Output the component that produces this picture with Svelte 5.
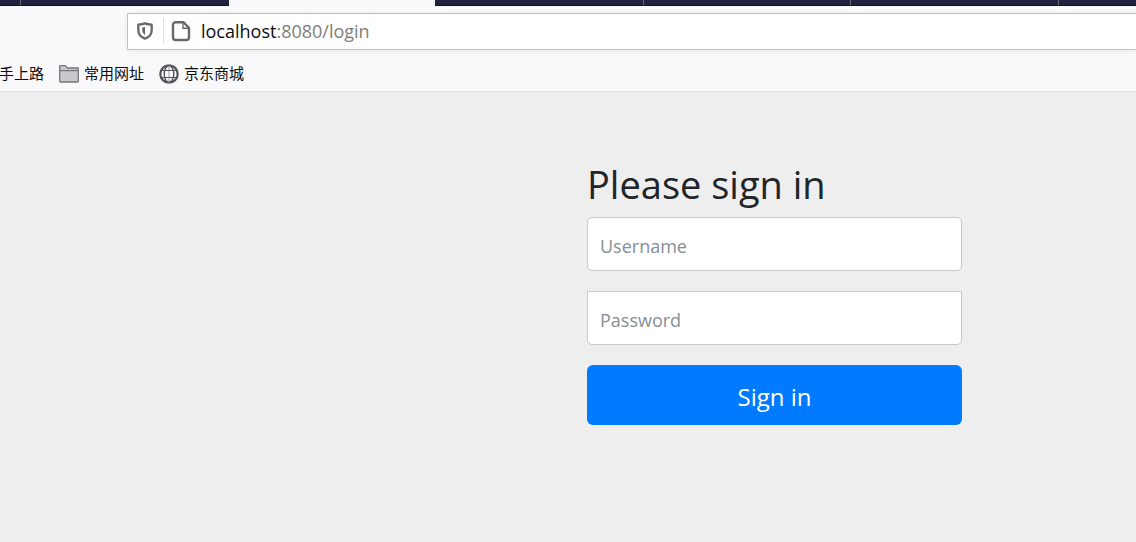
<script>
  const tabs = [
    { id: 1, active: false },
    { id: 2, active: false },
    { id: 3, active: true },
    { id: 4, active: false },
    { id: 5, active: false },
    { id: 6, active: false },
    { id: 7, active: false }
  ];

  const bookmarks = [
    { label: '手上路', icon: null },
    { label: '常用网址', icon: 'folder' },
    { label: '京东商城', icon: 'globe' }
  ];

  let username = $state('');
  let password = $state('');

  function handleSubmit(event) {
    event.preventDefault();
  }
</script>

<div class="browser">
  <div class="tab-strip">
    {#each tabs as tab (tab.id)}
      <div class="tab" class:active={tab.active}></div>
    {/each}
  </div>

  <div class="toolbar">
    <div class="url-bar">
      <svg class="shield" width="18" height="20" viewBox="0 0 18 20" aria-hidden="true">
        <path
          d="M9 2.4C6.8 3.3 4.6 3.6 2.3 3.7V8.9C2.3 13 4.6 16 9 17.6C13.4 16 15.7 13 15.7 8.9V3.7C13.4 3.6 11.2 3.3 9 2.4Z"
          fill="none"
          stroke="#68686a"
          stroke-width="2.3"
          stroke-linejoin="round"
        />
        <path d="M9 6V14C7.2 12.8 6.2 11.2 6.2 9V6.6Z" fill="#68686a" />
      </svg>
      <span class="divider"></span>
      <svg class="page-icon" width="20" height="22" viewBox="0 0 20 22" aria-hidden="true">
        <path
          d="M12.4 2.2H4.8A2.8 2.8 0 0 0 2 5V17.2A2.8 2.8 0 0 0 4.8 20H15.2A2.8 2.8 0 0 0 18 17.2V7.8Z"
          fill="none"
          stroke="#68686a"
          stroke-width="2.4"
          stroke-linejoin="round"
        />
        <path d="M12 3V8.2H17.4" fill="none" stroke="#68686a" stroke-width="1.4" />
      </svg>
      <span class="url"><span class="host">localhost</span>:8080/login</span>
    </div>
  </div>

  <nav class="bookmarks">
    {#each bookmarks as bookmark}
      <a href="#bookmark">
        {#if bookmark.icon === 'folder'}
          <svg width="20" height="20" viewBox="0 0 20 20" aria-hidden="true">
            <path
              d="M0.7 17.3V2.2Q0.7 1.6 1.3 1.6H6.2L8.4 4H18.7Q19.3 4 19.3 4.6V17.3Q19.3 18 18.6 18H1.4Q0.7 18 0.7 17.3Z"
              fill="#c9c9cc"
              stroke="#77777b"
              stroke-width="1.3"
            />
            <path d="M1 6.6H19" stroke="#77777b" stroke-width="1.2" />
          </svg>
        {:else if bookmark.icon === 'globe'}
          <svg width="20" height="20" viewBox="0 0 20 20" fill="none" aria-hidden="true">
            <circle cx="10" cy="10" r="8.7" stroke="#55555a" stroke-width="2.2" />
            <ellipse cx="10" cy="10" rx="4.8" ry="8.4" stroke="#55555a" stroke-width="1.4" />
            <path d="M10 1.5V18.5" stroke="#a39c96" stroke-width="1" />
            <path d="M2.4 6.5H17.6M2.4 13.5H17.6" stroke="#55555a" stroke-width="1.2" />
          </svg>
        {/if}
        <span class="label">{bookmark.label}</span>
      </a>
    {/each}
  </nav>

  <main class="page">
    <form class="form-signin" onsubmit={handleSubmit}>
      <h2>Please sign in</h2>
      <input
        class="username"
        type="text"
        placeholder="Username"
        aria-label="Username"
        bind:value={username}
      />
      <input
        class="password"
        type="password"
        placeholder="Password"
        aria-label="Password"
        bind:value={password}
      />
      <button type="submit">Sign in</button>
    </form>
  </main>
</div>

<style>
  :global(body) {
    margin: 0;
    background: #eee;
  }

  .browser {
    min-height: 100vh;
    display: flex;
    flex-direction: column;
    font-family: 'Segoe UI', 'Open Sans', 'Noto Sans CJK SC', sans-serif;
    overflow-x: hidden;
  }

  .tab-strip {
    display: grid;
    grid-template-columns: 21fr 208fr 206fr 209fr 207fr 208fr 77fr;
    height: 6px;
    background: #f9f9fb;
  }

  .tab {
    box-sizing: border-box;
    background: #212140;
    border-right: 1px solid #67676c;
    border-bottom: 1px solid #150a2c;
  }

  /* no divider next to the active tab or at the window edge */
  .tab:nth-child(2),
  .tab:last-child {
    border-right: none;
  }

  .tab.active {
    background: #f9f9fb;
    border: none;
  }

  .toolbar {
    padding: 7px 0 7px 127px;
    background: #f9f9fb;
  }

  .url-bar {
    box-sizing: border-box;
    display: flex;
    align-items: center;
    height: 37px;
    padding: 0 0 2px 8px;
    background: #fff;
    border: 1px solid #bebebe;
    border-right: none;
    border-radius: 2px 0 0 2px;
    box-shadow: 0 1px 6px rgba(0, 0, 0, 0.07);
  }

  .divider {
    width: 1px;
    height: 26px;
    margin: 0 7px 0 9px;
    background: #dedede;
  }

  .url {
    margin-left: 10px;
    font-size: 18px;
    line-height: 24px;
    color: #7d7d7d;
  }

  .host {
    color: #0c0c0d;
  }

  .bookmarks {
    display: flex;
    align-items: center;
    gap: 15px;
    height: 34px;
    margin-left: -1px;
    background: #f9f9fb;
    border-bottom: 1px solid #dedede;
  }

  .bookmarks a {
    display: flex;
    align-items: center;
    gap: 5px;
    font-family: 'Noto Sans CJK SC', sans-serif;
    font-size: 15px;
    line-height: 20px;
    color: #0c0c0d;
    text-decoration: none;
    white-space: nowrap;
  }

  .label {
    padding-bottom: 2px;
  }

  .page {
    flex: 1;
    display: grid;
    grid-template-columns: 587fr minmax(auto, 375px) 174fr;
    align-items: start;
    padding: 68px 0 40px;
    background: #eee;
  }

  .form-signin {
    grid-column: 2;
    width: 375px;
    max-width: 100%;
  }

  h2 {
    margin: 0 0 9px;
    font-size: 38px;
    font-weight: 400;
    line-height: 48px;
    color: #212529;
  }

  input {
    box-sizing: border-box;
    display: block;
    width: 100%;
    height: 54px;
    margin: 0 0 20px;
    padding: 4px 12px 0;
    font-family: inherit;
    font-size: 18px;
    color: #495057;
    background: #fff;
    border: 1px solid #c8c8c8;
    border-radius: 5px;
  }

  input::placeholder {
    color: #868e96;
    opacity: 1;
  }

  .password {
    border-top-left-radius: 0;
    border-top-right-radius: 0;
  }

  button {
    display: block;
    width: 100%;
    height: 60px;
    padding: 2px 16px 0;
    font-family: inherit;
    font-size: 24px;
    color: #fff;
    background: #007bff;
    border: none;
    border-radius: 6px;
    cursor: pointer;
  }
</style>
